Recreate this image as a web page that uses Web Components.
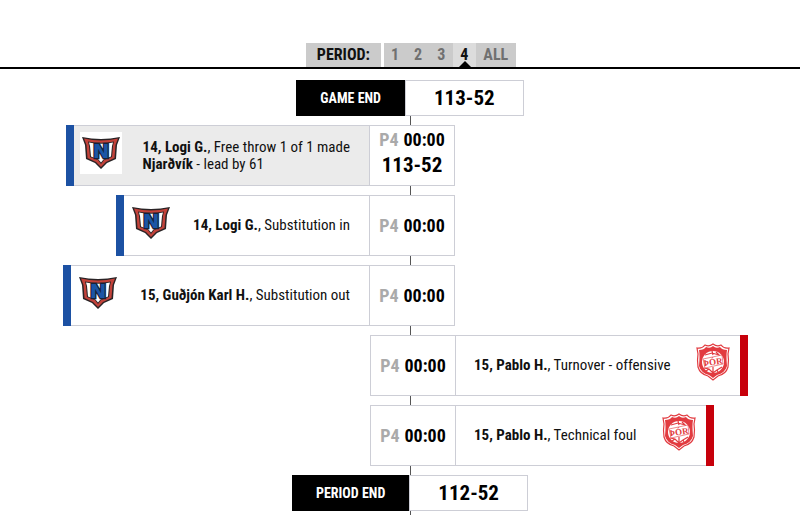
<!DOCTYPE html>
<html lang="en">
<head>
<meta charset="utf-8">
<meta name="viewport" content="width=device-width, initial-scale=1">
<title>Play by play</title>
<style>
  body {
    margin: 0;
    background: #fff;
    color: #111;
    font-family: "Roboto Condensed", "Arial Narrow", "Liberation Sans", sans-serif;
    font-size: 16px;
  }
</style>
</head>
<body>
<play-by-play>
  <period-tabs slot="tabs" periods="1,2,3,4,ALL" selected="4">Period:</period-tabs>
  <period-score score="113-52">Game end</period-score>
  <play-event side="home" period="P4" time="00:00" score="113-52" scoring>
    <b>14, Logi G.</b>, Free throw 1 of 1 made<br><b>Njarðvík</b> - lead by 61
  </play-event>
  <play-event side="home" period="P4" time="00:00"><b>14, Logi G.</b>, Substitution in</play-event>
  <play-event side="home" period="P4" time="00:00"><b>15, Guðjón Karl H.</b>, Substitution out</play-event>
  <play-event side="away" period="P4" time="00:00"><b>15, Pablo H.</b>, Turnover - offensive</play-event>
  <play-event side="away" period="P4" time="00:00"><b>15, Pablo H.</b>, Technical foul</play-event>
  <period-score score="112-52">Period end</period-score>
</play-by-play>

<script>
  const CRESTS = {
    home: `
      <svg viewBox="0 0 42 42" aria-hidden="true">
        <path d="M2 5Q21 9 40 5L37 13L36 27L27 31L21 37L15 31L6 27L5 13Z" fill="#292325"/>
        <path d="M4 6.500Q21 10.500 38 6.500L35.500 13L34.500 26L26 30L21 35L16 30L7.500 26L6.500 13Z" fill="#c2423a"/>
        <path d="M8 9.500Q21 12 34 9.500L33 14L32 25L24 28L21 32L18 28L10 25L9 14Z" fill="#292325"/>
        <path d="M9 10.500Q21 13 33 10.500L32 14L31 24.500L23.500 27.500L21 30.500L18.500 27.500L11 24.500L10 14Z" fill="#fff"/>
        <text x="21" y="26" text-anchor="middle" font-family="DejaVu Sans, sans-serif" font-size="20" font-weight="700" fill="#1b55a5" stroke="#172238" stroke-width="2.500" paint-order="stroke">N</text>
      </svg>`,
    away: `
      <svg viewBox="0 0 42 42" aria-hidden="true">
        <g fill="none" stroke="#e23b40">
          <path d="M5 6Q10 7 13 3Q17 5 21 2Q25 5 29 3Q32 7 37 6L36 12Q37 18 36 25Q34 32 26 34L21 38L16 34Q8 32 6 25Q5 18 6 12Z" fill="#fff" stroke-width="1.200"/>
          <path d="M7 8Q12 8 14 5Q18 7 21 4Q24 7 28 5Q30 8 35 8Q34 13 35 24Q33 31 25 33L21 36L17 33Q9 31 7 24Q8 13 7 8Z" fill="#e23b40" stroke="none"/>
          <circle cx="21" cy="20" r="11" fill="#fff" stroke="none"/>
          <path d="M13 13L20 11L27 13M20 9L21 13M12 26L17 27L21 31L25 28L30 25M17 27L14 29M25 28L26 30M21 25V31M24 10L28 14" stroke-width="1.200"/>
          <path d="M11 17L30 13L31 22L13 26Z" fill="#fff" stroke-width=".6"/>
        </g>
        <text x="21" y="23" transform="rotate(-8 21 20)" text-anchor="middle" font-family="Liberation Serif, serif" font-size="9" font-weight="700" fill="#e23b40">ÞÓR</text>
      </svg>`,
  };

  class TeamCrest extends HTMLElement {
    constructor() {
      super();
      this.attachShadow({ mode: 'open' });
    }

    connectedCallback() {
      this.shadowRoot.innerHTML = `
        <style>
          :host {
            display: block;
            width: 42px;
            height: 42px;
            background: #fff;
          }

          svg {
            display: block;
            width: 100%;
            height: 100%;
          }
        </style>
        ${CRESTS[this.getAttribute('team')]}
      `;
    }
  }

  class PeriodTabs extends HTMLElement {
    constructor() {
      super();
      this.attachShadow({ mode: 'open' });
    }

    connectedCallback() {
      this.render();
      this._setupEventListeners();
    }

    render() {
      const selected = this.getAttribute('selected');
      const buttons = this.getAttribute('periods').split(',').map((name) => `
        <button type="button" aria-pressed="${name === selected}">${name}</button>
      `).join('');

      this.shadowRoot.innerHTML = `
        <style>
          :host {
            display: flex;
            justify-content: center;
            gap: 3px;
            font-size: 16px;
            font-weight: 700;
            line-height: 24px;
          }

          .label {
            padding: 0 11px;
            background: #cbcbcb;
            color: #111;
            text-transform: uppercase;
          }

          .tabs {
            display: flex;
            background: #cbcbcb;
          }

          button {
            display: block;
            position: relative;
            margin: 0;
            padding: 0 8px 0 7px;
            border: 0;
            background: none;
            color: #707070;
            font: inherit;
            cursor: pointer;
          }

          button[aria-pressed="true"] {
            background: #dcdcdc;
            color: #111;
          }

          /* Pointer that joins the chosen tab to the rule below */
          button[aria-pressed="true"]::after {
            content: "";
            position: absolute;
            bottom: 0;
            left: calc(50% - 6px);
            border: 6px solid transparent;
            border-top: 0;
            border-bottom-color: #000;
          }
        </style>
        <span class="label" id="label"><slot></slot></span>
        <div class="tabs" role="group" aria-labelledby="label">${buttons}</div>
      `;
    }

    _setupEventListeners() {
      const buttons = this.shadowRoot.querySelectorAll('button');

      buttons.forEach((button) => {
        button.addEventListener('click', () => {
          buttons.forEach((other) => other.setAttribute('aria-pressed', other === button));
        });
      });
    }
  }

  class PeriodScore extends HTMLElement {
    constructor() {
      super();
      this.attachShadow({ mode: 'open' });
    }

    connectedCallback() {
      this.shadowRoot.innerHTML = `
        <style>
          :host {
            display: flex;
            align-self: center;
            height: 36px;
            font-weight: 700;
            line-height: 36px;
          }

          .label {
            padding: 0 24px;
            background: #000;
            color: #fff;
            font-size: 14px;
            text-transform: uppercase;
          }

          .score {
            box-sizing: border-box;
            padding: 0 28px;
            border: 1px solid #cdced6;
            background: #fff;
            color: #000;
            font-size: 21px;
            line-height: 34px;
          }
        </style>
        <div class="label"><slot></slot></div>
        <div class="score">${this.getAttribute('score')}</div>
      `;
    }
  }

  class PlayEvent extends HTMLElement {
    constructor() {
      super();
      this.attachShadow({ mode: 'open' });
    }

    connectedCallback() {
      const score = this.getAttribute('score');

      this.shadowRoot.innerHTML = `
        <style>
          :host {
            box-sizing: border-box;
            display: flex;
            min-height: 61px;
            border: 1px solid #cdced6;
            background: #fff;
          }

          :host([side="home"]) {
            align-self: flex-end;
            flex-direction: row-reverse;
            margin-right: calc(50% - 45px);
            border-left: 0;
          }

          :host([side="away"]) {
            align-self: flex-start;
            margin-left: calc(50% - 40px);
            border-right: 0;
          }

          .clock {
            box-sizing: border-box;
            display: flex;
            flex-direction: column;
            align-items: center;
            justify-content: center;
            width: 85px;
            background: #fff;
            color: #000;
            font-size: 18px;
            font-weight: 700;
            line-height: 22px;
          }

          :host([side="home"]) .clock {
            border-left: 1px solid #cdced6;
          }

          :host([side="away"]) .clock {
            border-right: 1px solid #cdced6;
          }

          :host([scoring]) .clock {
            padding-bottom: 4px;
          }

          .time {
            display: flex;
            gap: 5px;
          }

          .period {
            color: #aaa;
          }

          .score {
            font-size: 21px;
            line-height: 28px;
          }

          .play {
            display: flex;
            flex-direction: inherit;
            gap: 21px;
            padding: 0 6px 0 18px;
          }

          :host([side="home"]) .play {
            padding: 0 19px 0 6px;
          }

          :host([scoring]) .play {
            background: #ebebeb;
          }

          .text {
            align-self: center;
            font-size: 15px;
            line-height: 17px;
          }

          team-crest {
            margin-top: 6px;
          }

          .stripe {
            width: 8px;
            margin: -1px 0;
            background: #c7000b;
          }

          :host([side="home"]) .stripe {
            background: #1c51a3;
          }
        </style>
        <div class="clock">
          <div class="time">
            <span class="period">${this.getAttribute('period')}</span>
            <span>${this.getAttribute('time')}</span>
          </div>
          ${score ? `<div class="score">${score}</div>` : ''}
        </div>
        <div class="play">
          <div class="text"><slot></slot></div>
          <team-crest team="${this.getAttribute('side')}"></team-crest>
        </div>
        <div class="stripe"></div>
      `;
    }
  }

  class PlayByPlay extends HTMLElement {
    constructor() {
      super();
      this.attachShadow({ mode: 'open' });
    }

    connectedCallback() {
      this.shadowRoot.innerHTML = `
        <style>
          :host {
            box-sizing: border-box;
            display: flex;
            flex-direction: column;
            min-height: 100vh;
            padding-top: 43px;
          }

          header {
            padding-left: 22px;
            border-bottom: 2px solid #000;
          }

          main {
            flex: 1;
            display: flex;
            margin: 11px 0 0 20px;
          }

          /* The axis runs behind the rows and shows in the gaps */
          .timeline {
            flex: 1;
            display: flex;
            flex-direction: column;
            gap: 9px;
            padding-bottom: 4px;
            background: linear-gradient(#555, #555) 50% 8px / 1px 100% no-repeat;
          }
        </style>
        <header><slot name="tabs"></slot></header>
        <main>
          <div class="timeline"><slot></slot></div>
        </main>
      `;
    }
  }

  customElements.define('team-crest', TeamCrest);
  customElements.define('period-tabs', PeriodTabs);
  customElements.define('period-score', PeriodScore);
  customElements.define('play-event', PlayEvent);
  customElements.define('play-by-play', PlayByPlay);
</script>
</body>
</html>
